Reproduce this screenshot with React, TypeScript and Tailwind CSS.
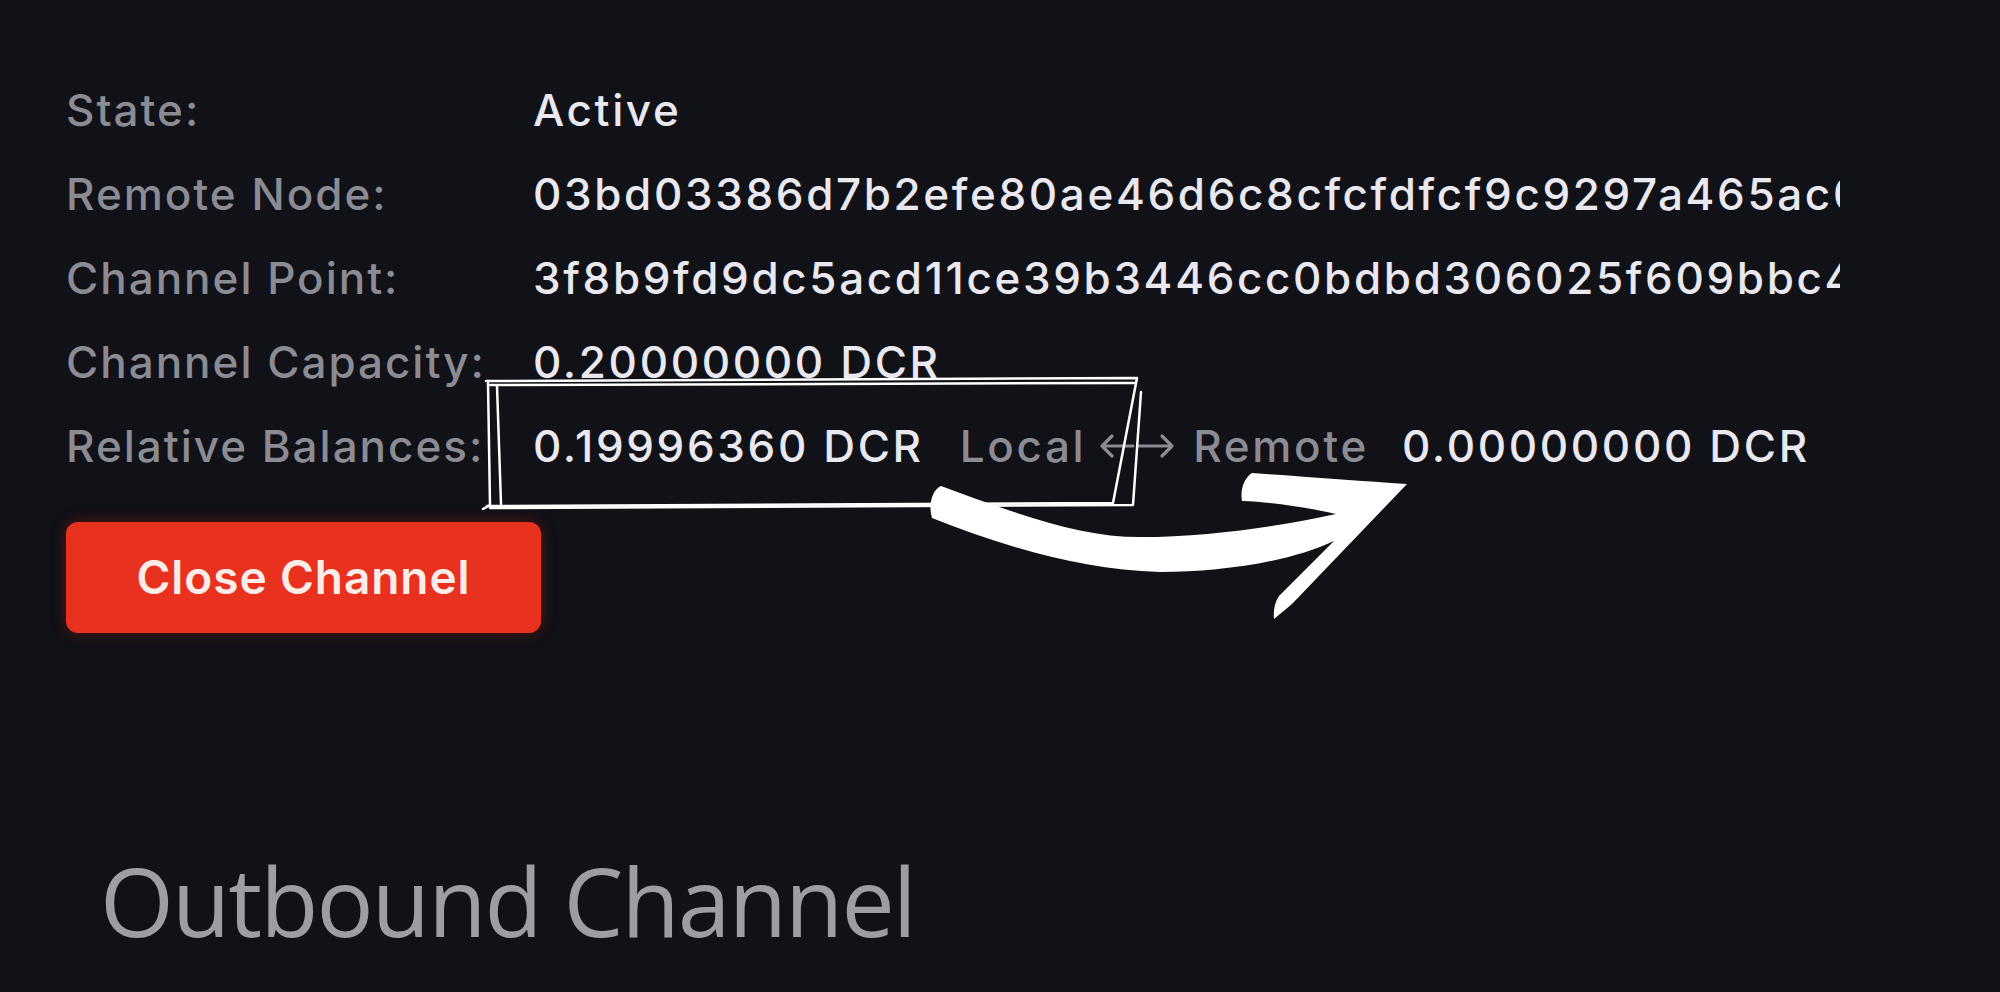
const rows: { label: string; value: string }[] = [
  { label: 'State:', value: 'Active' },
  { label: 'Remote Node:', value: '03bd03386d7b2efe80ae46d6c8cfcfdfcf9c9297a465ac06e1f2b9d0c7a84e51d3' },
  { label: 'Channel Point:', value: '3f8b9fd9dc5acd11ce39b3446cc0bdbd306025f609bbc4a7e2d15c90b3f8e6a1:0' },
  { label: 'Channel Capacity:', value: '0.20000000 DCR' },
];

function BothArrow() {
  return (
    <svg width="78" height="26" viewBox="0 0 78 26" fill="none" stroke="#8b8b93" strokeWidth="3.2" strokeLinecap="round" strokeLinejoin="round">
      <path d="M4 13h31M14 3L4 13l10 10" />
      <path d="M41 13h33M64 3l10 10-10 10" />
    </svg>
  );
}

// hand-drawn annotation: sketchy box + brush arrow
function Annotation() {
  return (
    <svg className="pointer-events-none absolute left-0 top-0" width="2000" height="992" viewBox="0 0 2000 992">
      <path d="M487 380 L1138 378 L1136 394 L488 396 Z" fill="#111118" />
      <g fill="none" stroke="#ffffff" strokeWidth="2.5" strokeLinejoin="round" strokeLinecap="round">
        <path d="M486 381 L1137 378 L1113 503 L487 506" />
        <path d="M490 385 L1134 383" />
        <path d="M488 383 L490 505 L483 509" />
        <path d="M497 386 L501 504" />
        <path d="M1141 392 L1133 505 L490 508" />
      </g>
      <path
        fill="#ffffff"
        d="M941 486 C1020 515 1080 537 1140 537 C1210 537 1280 526 1336 514 C1300 506 1270 502 1242 501 C1240 490 1244 478 1252 473 C1310 477 1360 481 1407 484 L1292 604 L1274 619 C1273 610 1275 602 1279 596 L1334 541 C1290 562 1220 572 1160 572 C1080 570 1000 545 932 518 C928 505 932 490 941 486 Z"
      />
    </svg>
  );
}

export default function App() {
  return (
    <div className="relative h-[992px] w-[2000px] overflow-hidden bg-[#111118] font-['Inter','Liberation_Sans',sans-serif]">
      <div className="pl-[66px] pt-[68px]">
        <div className="flex flex-col">
          {rows.map((r) => (
            <div key={r.label} className="flex h-[84px] items-center text-[44px] font-medium">
              <div className="w-[467px] shrink-0 tracking-[0.045em] text-[#8b8b93]">{r.label}</div>
              <div className="w-[1307px] overflow-hidden whitespace-nowrap tracking-[0.06em] text-[#e8e8ee]">{r.value}</div>
            </div>
          ))}
          <div className="flex h-[84px] items-center whitespace-nowrap text-[44px] font-medium">
            <div className="w-[467px] shrink-0 tracking-[0.045em] text-[#8b8b93]">Relative Balances:</div>
            <div className="flex items-center tracking-[0.06em]">
              <span className="text-[#e8e8ee]">0.19996360 DCR</span>
              <span className="ml-[36px] text-[#8b8b93]">Local</span>
              <span className="ml-[12px]"><BothArrow /></span>
              <span className="ml-[17px] text-[#8b8b93]">Remote</span>
              <span className="ml-[33px] text-[#e8e8ee]">0.00000000 DCR</span>
            </div>
          </div>
        </div>
        <button className="mt-[34px] flex h-[111px] w-[475px] items-center justify-center rounded-[12px] bg-[#e8321f] text-[46px] font-semibold tracking-[0.02em] text-[#fdece8] shadow-[0_0_14px_rgba(150,25,10,0.55)]">
          Close Channel
        </button>
      </div>
      <div className="pl-[100px] pt-[220px] font-['Open_Sans','Noto_Sans',sans-serif] text-[95px] leading-none tracking-[-0.02em] text-[#9d9da6]">
        Outbound Channel
      </div>
      <Annotation />
    </div>
  );
}
